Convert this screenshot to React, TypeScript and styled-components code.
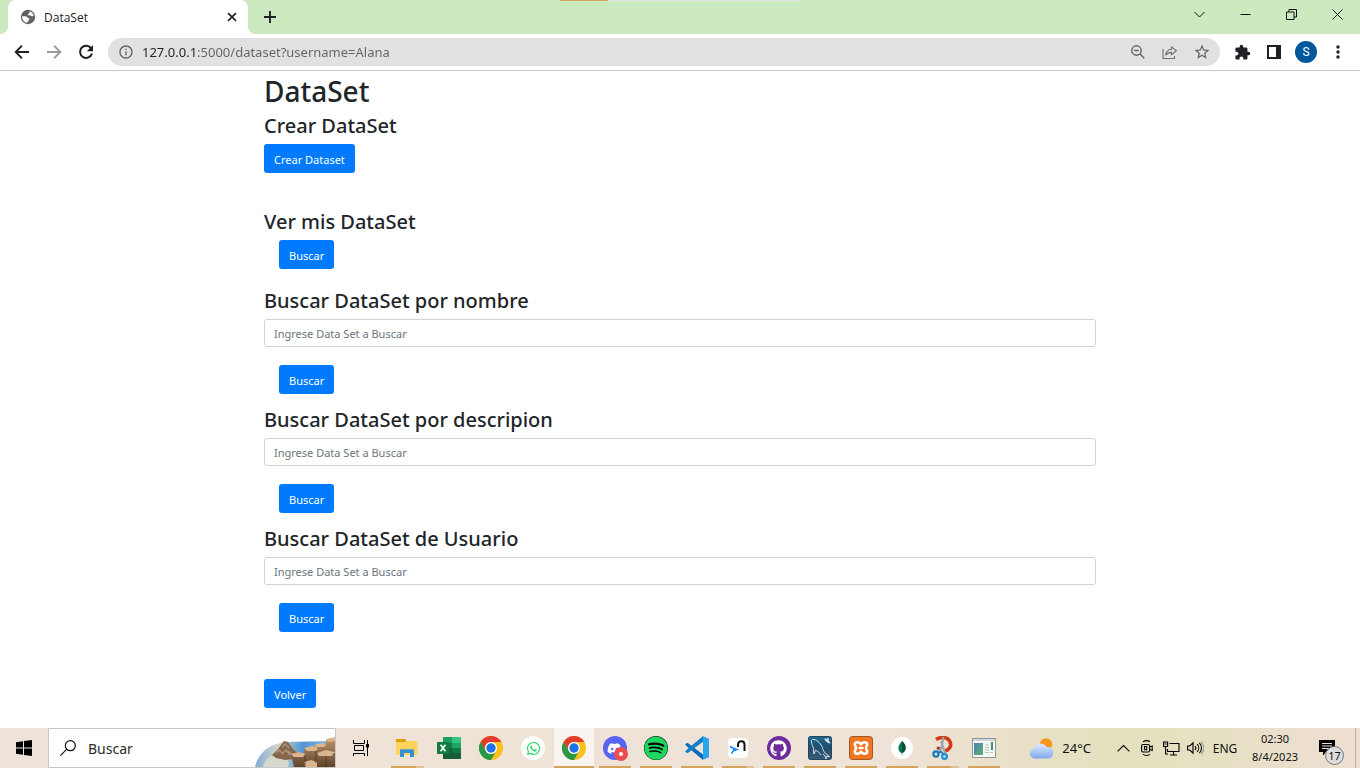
import React from "react";
import styled, { createGlobalStyle } from "styled-components";
import {
  MdInfoOutline,
  MdStarBorder,
  MdExtension,
  MdMoreVert,
} from "react-icons/md";
import { FaWhatsapp, FaDiscord, FaSpotify, FaGithub } from "react-icons/fa";

const GlobalStyle = createGlobalStyle`
  *, *::before, *::after { box-sizing: border-box; }
  body {
    margin: 0;
    background: #fff;
    color: #212529;
    font-family: "Noto Sans", "Open Sans", sans-serif;
  }
  button, input { font-family: inherit; }
  button { margin: 0; padding: 0; border: 0; background: none; color: inherit; }
  svg { display: block; flex: none; }
`;

const Screen = styled.div`
  display: flex;
  flex-direction: column;
  min-height: 100vh;
  position: relative;
`;

/* ---------- browser ---------- */

const ProgressStrip = styled.div`
  position: absolute;
  top: 0;
  left: 50%;
  width: 240px;
  height: 1px;
  margin-left: -120px;
  background: linear-gradient(90deg, #d4a35c 48px, #e3e1e6 48px);
`;

const TabStrip = styled.header`
  display: flex;
  height: 34px;
  padding-left: 8px;
  background: #cbeabf;
`;

const Tab = styled.div`
  display: flex;
  align-items: center;
  position: relative;
  width: 240px;
  padding: 0 10px 0 12px;
  border-radius: 8px 8px 0 0;
  background: #fff;
  color: #202124;
  font-size: 12px;
  &::before, &::after {
    content: "";
    position: absolute;
    bottom: 0;
    width: 8px;
    height: 8px;
  }
  &::before {
    right: 100%;
    background: radial-gradient(circle at 0 0, #cbeabf 8px, #fff 8px);
  }
  &::after {
    left: 100%;
    background: radial-gradient(circle at 100% 0, #cbeabf 8px, #fff 8px);
  }
`;

const TabTitle = styled.span`
  flex: 1;
  margin-left: 8px;
  font-family: "Open Sans", sans-serif;
`;

const IconButton = styled.button<{ $w?: number }>`
  display: flex;
  align-items: center;
  justify-content: center;
  width: ${(p) => p.$w ?? 32}px;
  flex: none;
`;

const WindowButtons = styled.div`
  display: flex;
  height: 28px;
  margin-left: auto;
`;

const Toolbar = styled.nav`
  display: flex;
  align-items: center;
  height: 37px;
  padding: 0 6px;
  border-bottom: 1px solid #c8c8c8;
  color: #202124;
`;

const AddressBar = styled.label`
  display: flex;
  align-items: center;
  flex: 1;
  height: 28px;
  margin: 0 6px;
  padding: 0 2px 0 10px;
  border-radius: 14px;
  background: #e1e1e1;
  color: #5f6368;
`;

const AddressInput = styled.input`
  flex: 1;
  min-width: 0;
  margin-left: 8px;
  padding: 0;
  border: 0;
  outline: 0;
  background: linear-gradient(90deg, #202124 54px, #5f6368 54px);
  background-clip: text;
  -webkit-text-fill-color: transparent;
  color: #5f6368;
  font-size: 13px;
`;

const Avatar = styled.span`
  display: flex;
  align-items: center;
  justify-content: center;
  width: 22px;
  height: 22px;
  border-radius: 50%;
  background: #01579b;
  color: #fff;
  font-family: Roboto, sans-serif;
  font-size: 12px;
`;

/* ---------- page ---------- */

const Content = styled.main`
  flex: 1;
  width: 100%;
  max-width: 832px;
  margin: 0 auto;
  padding: 3px 0 20px;
`;

const Title = styled.h1`
  margin: 0 0 5px;
  font-size: 28px;
  font-weight: 500;
  line-height: 34px;
`;

const Section = styled.section<{ $gap: number }>`
  margin-bottom: ${(p) => p.$gap}px;
`;

const Heading = styled.h3`
  margin: 0 0 5px;
  font-size: 20px;
  font-weight: 500;
  line-height: 26px;
`;

const PrimaryButton = styled.button<{ $indent?: boolean }>`
  display: block;
  height: 29px;
  margin-left: ${(p) => (p.$indent ? 15 : 0)}px;
  padding: 2px 10px 0;
  border-radius: 3px;
  background: #007bff;
  color: #fff;
  font-size: 11px;
  line-height: 18px;
`;

const TextField = styled.input`
  display: block;
  width: 100%;
  height: 28px;
  margin-bottom: 18px;
  padding: 1px 9px 0;
  border: 1px solid #ced4da;
  border-radius: 3px;
  color: #495057;
  font-size: 11px;
  &::placeholder { color: #6c757d; opacity: 1; }
`;

/* ---------- taskbar ---------- */

const Taskbar = styled.footer`
  display: flex;
  height: 40px;
  background: linear-gradient(90deg, #efe2d8 0, #efe2d6 66%, #e8e0c8 75%, #e3e1bd 82%, #e6e0c3 90%, #eddfd0 97%);
  color: #111;
`;

const SearchBox = styled.label`
  display: flex;
  align-items: center;
  width: 288px;
  padding-left: 11px;
  border: 1px solid #c8c8c8;
  background: #fff;
`;

const SearchInput = styled.input`
  flex: 1;
  min-width: 0;
  margin-left: 12px;
  padding: 0;
  border: 0;
  outline: 0;
  font-size: 14px;
  &::placeholder { color: #2b2b2b; opacity: 1; }
`;

const Apps = styled.div`
  display: flex;
`;

type Run = "none" | "one" | "many";

const AppButton = styled.button<{ $w: number; $run: Run; $active?: boolean }>`
  display: flex;
  align-items: center;
  justify-content: center;
  position: relative;
  width: ${(p) => p.$w}px;
  background: ${(p) => (p.$active ? "#f9f4f0" : "none")};
  &::after {
    content: "";
    display: ${(p) => (p.$run === "none" ? "none" : "block")};
    position: absolute;
    bottom: 0;
    left: ${(p) => (p.$active ? 0 : 5)}px;
    right: ${(p) => (p.$active ? 0 : 4)}px;
    height: 2px;
    background: ${(p) =>
      p.$run === "many"
        ? "linear-gradient(90deg, #d4a35c 75%, #dfc095 75%)"
        : "#d4a35c"};
  }
`;

const Tray = styled.div`
  display: flex;
  align-items: center;
  margin-left: auto;
  font-size: 12px;
`;

const Weather = styled.button`
  display: flex;
  align-items: center;
  gap: 8px;
  margin-right: 20px;
  font-size: 13px;
`;

const Language = styled.button`
  width: 36px;
  font-size: 12px;
`;

const Clock = styled.button`
  width: 64px;
  font-size: 11px;
  line-height: 18px;
  text-align: center;
`;

const Notifications = styled.button`
  position: relative;
  display: flex;
  align-items: center;
  justify-content: center;
  width: 40px;
  height: 40px;
`;

const Count = styled.span`
  position: absolute;
  left: 18px;
  top: 18px;
  width: 19px;
  height: 19px;
  border: 1px solid #777;
  border-radius: 50%;
  background: #dcdcdc;
  font-size: 11px;
  line-height: 17px;
  text-align: center;
`;

const ShowDesktop = styled.button`
  width: 5px;
  height: 40px;
  margin-left: 8px;
  border-left: 1px solid #b9ad9f;
`;

/* ---------- drawings ---------- */

const Globe = () => (
  <svg width="16" height="16" viewBox="0 0 16 16">
    <circle cx="8" cy="8" r="7.2" fill="#5f6368" />
    <path d="M2 7.400C4.200 7 6.700 7.200 7.200 8.300c.4 1 1.800.3 2.100 1.300.3 1-.8 1.300-.9 2.200-.1.700-.9.800-1 1.800-3.300-.3-5.600-3.200-5.400-6.200z" fill="#fff" />
    <path d="M9.600 2.400c2.200.6 3.600 2.100 4.100 4.300-1 .9-2.500.7-3.300-.1-.6-.6-1.900.2-2.400-.5-.5-.8.200-1.300.9-1.500.7-.2.200-1.300.7-2.200z" fill="#fff" />
  </svg>
);

const Stroke = ({ d, size = 16, color = "#202124" }: { d: string; size?: number; color?: string }) => (
  <svg width={size} height={size} viewBox="0 0 16 16" fill="none" stroke={color} strokeWidth="1.900">
    <path d={d} />
  </svg>
);

const Reload = () => (
  <svg width="16" height="16" viewBox="0 0 16 16">
    <path d="M13.300 4.500A6.100 6.100 0 1 0 14 9.500" fill="none" stroke="#202124" strokeWidth="2" />
    <path d="M15 1v6.200H8.800z" fill="#202124" />
  </svg>
);

const ZoomOut = () => (
  <svg width="16" height="16" viewBox="0 0 16 16" fill="none" stroke="#5f6368" strokeWidth="1.4">
    <circle cx="6.5" cy="6.5" r="4.7" />
    <path d="M4.2 6.5h4.6M10 10l4.3 4.3" />
  </svg>
);

const Share = () => (
  <svg width="16" height="16" viewBox="0 0 16 16" fill="none" stroke="#6c6f73" strokeWidth="1.1">
    <path d="M1 5v9.5h11.5V12M9.5 3l5 3.8-5 3.8V8.4C7 8.4 5 9.2 3.6 11.3 4 8 6 5.500 9.500 5.200z" />
  </svg>
);

const SidePanel = () => (
  <svg width="14" height="14" viewBox="0 0 14 14">
    <path d="M0 0h14v14H0z" fill="#202124" />
    <path d="M2 2h7v10H2z" fill="#fff" />
  </svg>
);

const Chrome = () => (
  <svg width="24" height="24" viewBox="0 0 24 24">
    <circle cx="12" cy="12" r="12" fill="#fbc11a" />
    <path d="M1.6 6A12 12 0 0 1 22.4 6H12a6 6 0 0 0-5.2 9z" fill="#e33b2e" />
    <path d="M1.6 6A12 12 0 0 0 12 24l5.2-9A6 6 0 0 1 6.800 15z" fill="#269847" />
    <circle cx="12" cy="12" r="6" fill="#fff" />
    <circle cx="12" cy="12" r="4.7" fill="#1a73e8" />
  </svg>
);

const Windows = () => (
  <svg width="16" height="16" viewBox="0 0 16 16">
    <path d="M0 2.2l7-1v6.3H0zM8 1.1L16 0v7.5H8zM0 8.5h7v6.3l-7-1zM8 8.5h8V16l-8-1.1z" fill="#000" />
  </svg>
);

const Magnifier = () => (
  <svg width="16" height="16" viewBox="0 0 16 16" fill="none" stroke="#111" strokeWidth="1.2">
    <circle cx="10.3" cy="5.7" r="5" />
    <path d="M6.8 9.2L.4 15.6" />
  </svg>
);

const Causeway = () => (
  <svg width="80" height="38" viewBox="0 0 80 38">
    <defs>
      <linearGradient id="sea" x1="0" y1="0" x2="1" y2="0">
        <stop offset="0" stopColor="#7fabd8" />
        <stop offset=".3" stopColor="#d8d6c4" />
        <stop offset=".6" stopColor="#4e94d6" />
        <stop offset="1" stopColor="#9cc4e4" />
      </linearGradient>
      <linearGradient id="rock" x1="0" y1="0" x2="0" y2="1">
        <stop offset="0" stopColor="#c0966c" />
        <stop offset="1" stopColor="#5f432b" />
      </linearGradient>
    </defs>
    <path d="M0 38C3 24 14 15 30 13l50-1v26z" fill="url(#sea)" />
    <path d="M8 38c2-10 9-12 15-12 10 1 12 6 10 12z" fill="#d6d8cc" />
    <path d="M17 26l6-6 6-8 4 1 5 7 6 5-5 5-9 1-9-2z" fill="#86674d" />
    <path d="M21 24l3-3 3 3M27 18l3-3 4 4M27 25l4-4 4 5M33 22l4 3" stroke="#b4967a" strokeWidth="1.3" fill="none" />
    <path d="M36 25l8-2 7 3v12H39zM49 20l8-2 7 2v18H51zM59 17l8-2 4 2v9H59zM62 24l9-3 9 3v14H62zM71 11l9-2v14l-9-1z" fill="url(#rock)" />
    <path d="M36 25l8-2 6 2-2 3h-9zM49 19l8-2 6 2-2 3h-9zM62 24l9-3 8 2-2 4H64zM59 16l8-2 4 2-2 2h-8zM71 10l9-2v4l-7 1zM49 33l7-2 6 2v5H50z" fill="#d9b690" />
    <path d="M50 27v11M61 22v12M71 27v11" stroke="#4c3524" strokeWidth=".8" />
  </svg>
);

const TaskView = () => (
  <svg width="16" height="16" viewBox="0 0 16 16" fill="none" stroke="#000" strokeWidth="1">
    <path d="M.5 0v3.500h11V0M1.500 5.500h9v5h-9zM.5 16v-2.500h11V16M14.500 0v16" />
    <path d="M13 4h3v3.500h-3z" fill="#000" stroke="none" />
  </svg>
);

const Explorer = () => (
  <svg width="22" height="20" viewBox="0 0 22 20">
    <path d="M0 2.5V2c0-.8.6-1 1-1h8l1.500 2H20c1 0 1.500.5 1.500 1.300V16c0 .8-.5 1-1 1H1c-.6 0-1-.3-1-1z" fill="#ffd45e" />
    <path d="M0 4V2c0-.8.6-1 1-1h8l1.300 2H10L8.800 4z" fill="#dca000" />
    <path d="M4 19v-6.500c0-.8.5-1.200 1.200-1.200h11.600c.7 0 1.200.4 1.200 1.200V19h-4v-4H8v4z" fill="#3590d4" />
  </svg>
);

const Excel = () => (
  <svg width="24" height="22" viewBox="0 0 24 22">
    <path d="M6 1c0-.6.4-1 1-1h8v22H7c-.6 0-1-.4-1-1z" fill="#1e9e63" />
    <path d="M15 0h8c.6 0 1 .4 1 1v5h-9z" fill="#33c481" />
    <path d="M6 6h9v5H6z" fill="#157a48" />
    <path d="M15 6h9v5h-9z" fill="#21a366" />
    <path d="M6 11h18v10c0 .6-.4 1-1 1H7c-.6 0-1-.4-1-1z" fill="#185c37" />
    <path d="M15 11h9v5h-9z" fill="#107c41" />
    <rect y="5" width="12" height="12" rx="1" fill="#107c41" />
    <path d="M3.600 7.700l4.800 6.600M8.400 7.700l-4.800 6.600" stroke="#fff" strokeWidth="1.700" />
  </svg>
);

const Disc = styled.span<{ $bg: string; $fg: string; $radius?: number; $size?: number }>`
  display: flex;
  align-items: center;
  justify-content: center;
  position: relative;
  width: ${(p) => p.$size ?? 24}px;
  height: ${(p) => p.$size ?? 24}px;
  border-radius: ${(p) => p.$radius ?? 12}px;
  background: ${(p) => p.$bg};
  color: ${(p) => p.$fg};
`;

const RecordDot = styled.span`
  position: absolute;
  left: 11px;
  top: 11px;
  width: 14px;
  height: 14px;
  border: 5px solid #ed4d4f;
  border-radius: 50%;
  background: #fff;
`;

const VsCode = () => (
  <svg width="24" height="24" viewBox="0 0 24 24">
    <path d="M0 8.300l2.500-1.500L18 18.400V24L2 10.400z" fill="#0a6fb8" />
    <path d="M0 15.800l2.500 1.400L18 5.800V0L2 13.600z" fill="#0f80cc" />
    <path d="M17.400 0L24 2.800v18.400L17.400 24c.4-.6.6-1.200.6-2V2c0-.8-.2-1.400-.6-2z" fill="#2aa6ef" />
  </svg>
);

const Neo = () => (
  <svg width="16" height="16" viewBox="0 0 16 16" fill="none">
    <path d="M8 7V4.500C8 .200 14.500.200 14.500 4.500V11" stroke="#111" strokeWidth="2" />
    <path d="M0 6.500l3 1.500 3 1.500M4.500 9.500l-3 4M4.500 9.500h4" stroke="#168cff" strokeWidth="1.600" />
    <circle cx="4.600" cy="9.500" r="1.800" fill="#168cff" />
  </svg>
);

const MySql = () => (
  <svg width="24" height="24" viewBox="0 0 24 24">
    <defs>
      <linearGradient id="deep" x1="0" y1="0" x2="0" y2="1">
        <stop offset="0" stopColor="#1d6a94" />
        <stop offset=".5" stopColor="#214d6c" />
        <stop offset="1" stopColor="#3b5f77" />
      </linearGradient>
    </defs>
    <rect x=".5" y=".5" width="23" height="23" rx="2" fill="url(#deep)" stroke="#23465f" />
    <path d="M6 18c-1.500-2 .5-5-1.500-8.500C3.500 7.500 2.500 4 4.500 3.500c4-.5 7 3 9.500 7 1 3 1.500 5 3.500 7l4 3-3 0-.5 2.500c-.5-2.500-1.500-4-3-5" fill="none" stroke="#d5e0e7" strokeWidth="1" />
    <path d="M6 18c.8-1.500 1-2.500 1.500-4 1.500 1 4 2.500 5.500 5" fill="none" stroke="#d5e0e7" strokeWidth="1" />
    <path d="M16 2.500l2.500.5L20.500 1.500 21 5l2 2.500-3-.5-2.500-2z" fill="#d5e0e7" />
  </svg>
);

const Xampp = () => (
  <svg width="24" height="24" viewBox="0 0 24 24">
    <rect x=".5" y=".5" width="23" height="23" rx="3" fill="#f1761f" stroke="#a0562a" />
    <path d="M12 8.300C10.500 6 6.500 5.300 5.800 7.800c-.4 1.700 1.200 2.200 1.200 4.200s-1.600 2.500-1.200 4.200c.7 2.500 4.700 1.800 6.200-.5 1.500 2.300 5.500 3 6.200.5.4-1.700-1.200-2.200-1.200-4.200s1.600-2.500 1.200-4.200C17.500 5.300 13.500 6 12 8.300z" fill="none" stroke="#fff" strokeWidth="2.600" strokeLinejoin="round" />
    <path d="M9.500 12h5" stroke="#fff" strokeWidth="2.400" />
  </svg>
);

const Leaf = () => (
  <svg width="8" height="14" viewBox="0 0 8 14">
    <path d="M4 0c2 2 4 4 3.600 7.400C7.300 10 5.500 11.500 4.300 12V14h-.6v-2C2 11.400.6 9.700.4 7.400.2 4 2.500 2 4 0z" fill="#10744f" />
    <path d="M4 0c2 2 4 4 3.600 7.400C7.300 10 5.500 11.500 4 12z" fill="#084f37" />
  </svg>
);

const Scissors = () => (
  <svg width="22" height="24" viewBox="0 0 22 24" fill="none">
    <path d="M4 3.500C8 1 14 .500 17 4c3 4 2 9-4 11" stroke="#d33a14" strokeWidth="3.600" />
    <path d="M5 11.500l4 2" stroke="#b52c10" strokeWidth="2.600" />
    <path d="M11.500 1L10 9l-2.500 7M9 5l2 6 2 6" stroke="#9aa5b0" strokeWidth="2.200" />
    <circle cx="4" cy="18" r="2.600" stroke="#1178bd" strokeWidth="2.200" />
    <circle cx="12.500" cy="20.500" r="2.400" stroke="#1594dc" strokeWidth="2.200" />
    <path d="M6 17.500l3-2 2.500 3" stroke="#1178bd" strokeWidth="1.600" />
  </svg>
);

const WindowApp = () => (
  <svg width="24" height="20" viewBox="0 0 24 20">
    <defs>
      <linearGradient id="pane" x1="0" y1="0" x2="1" y2="1">
        <stop offset="0" stopColor="#4a82b4" />
        <stop offset="1" stopColor="#5fb06a" />
      </linearGradient>
    </defs>
    <rect x=".5" y=".5" width="23" height="19" fill="#f6f8f8" stroke="#8d979c" />
    <path d="M1 1h22v2H1z" fill="#cfd6da" />
    <path d="M2 5h9v12H2z" fill="url(#pane)" />
    <path d="M13 7h4M13 9.500h4M13 12h4M13 14.500h4M18 14.500h3" stroke="#b9c0c4" />
    <path d="M19 4h2v8h-2z" fill="#3c9b63" />
  </svg>
);

const SunCloud = () => (
  <svg width="25" height="21" viewBox="0 0 25 21">
    <defs>
      <linearGradient id="cloud" x1="0" y1="0" x2="0" y2="1">
        <stop offset="0" stopColor="#dfebff" />
        <stop offset="1" stopColor="#7ea8ee" />
      </linearGradient>
    </defs>
    <circle cx="17" cy="6.500" r="6.200" fill="#f8951f" />
    <path d="M5.500 20.500a5 5 0 0 1-.5-9.900A7 7 0 0 1 17.600 9a5.800 5.800 0 0 1 1.900 11.500z" fill="url(#cloud)" />
  </svg>
);

const Camera = () => (
  <svg width="12" height="16" viewBox="0 0 12 16" fill="none" stroke="#000" strokeWidth="1.100">
    <rect x=".6" y="4.500" width="8" height="7.500" rx="1.500" />
    <path d="M3.500 6.500h2.200v3.200H3.500z" />
    <path d="M8.600 7l2.600-1v4.500l-2.600-1M2 1.800C4 .4 7 .4 9 1.800M2 14.400c2 1.200 5 1.200 7 0" />
  </svg>
);

const Network = () => (
  <svg width="17" height="15" viewBox="0 0 17 15" fill="none" stroke="#000" strokeWidth="1.100">
    <path d="M6.500 2.500H16v8H4.500V8M10.500 10.500V14M7 14h7M.6 1h4v4.500h-4zM2.600 5.500V13H5M1.600 3h2" />
  </svg>
);

const Speaker = () => (
  <svg width="17" height="14" viewBox="0 0 17 14" fill="none" stroke="#000" strokeWidth="1.100">
    <path d="M.6 5v4h2.200L6 12.200V1.800L2.800 5zM8 5c1 1.200 1 2.800 0 4M10.200 3.200c2 2.200 2 5.400 0 7.600" />
    <path d="M12.400 1.800c2.800 3 2.800 7.400 0 10.400" />
    <path d="M14.400.6c3 3.600 3 9.200 0 12.800" stroke="#999" />
  </svg>
);

const Note = () => (
  <svg width="16" height="16" viewBox="0 0 16 16">
    <path d="M0 0h16v12h-9l-3 3.500V12H0z" fill="#000" />
    <path d="M3 3.500h10M3 6h10M3 8.500h7" stroke="#eddfd0" strokeWidth="1.100" />
  </svg>
);

const Line = ({ d, size = 11 }: { d: string; size?: number }) => (
  <svg width={size} height={size} viewBox="0 0 11 11" fill="none" stroke="#111" strokeWidth="1">
    <path d={d} />
  </svg>
);

/* ---------- data ---------- */

type AppItem = { name: string; icon: React.ReactNode; run: Run; active?: boolean };

const pinned: AppItem[] = [
  { name: "Explorador de archivos", icon: <Explorer />, run: "many" },
  { name: "Excel", icon: <Excel />, run: "none" },
  { name: "Chrome", icon: <Chrome />, run: "none" },
  { name: "WhatsApp", icon: <Disc $bg="#fff" $fg="#25d366"><FaWhatsapp size={15} /></Disc>, run: "none" },
];

const running: AppItem[] = [
  { name: "DataSet - Chrome", icon: <Chrome />, run: "one", active: true },
  { name: "Discord", icon: <Disc $bg="#5865f2" $fg="#fff"><FaDiscord size={15} /><RecordDot /></Disc>, run: "one" },
  { name: "Spotify", icon: <Disc $bg="#000" $fg="#1ed760"><FaSpotify size={24} /></Disc>, run: "one" },
  { name: "Visual Studio Code", icon: <VsCode />, run: "one" },
  { name: "Ngrok", icon: <Disc $bg="#fff" $fg="#111" $size={20} $radius={4}><Neo /></Disc>, run: "many" },
  { name: "GitHub Desktop", icon: <Disc $bg="#6e2c9c" $fg="#fff"><FaGithub size={17} /></Disc>, run: "one" },
  { name: "MySQL Workbench", icon: <MySql />, run: "one" },
  { name: "XAMPP", icon: <Xampp />, run: "one" },
  { name: "MongoDB Compass", icon: <Disc $bg="#fff" $fg="#10744f" $size={22}><Leaf /></Disc>, run: "one" },
  { name: "Recortes", icon: <Scissors />, run: "many" },
  { name: "Panel", icon: <WindowApp />, run: "one" },
];

const searches = [
  { id: "nombre", title: "Buscar DataSet por nombre", gap: 13 },
  { id: "descripcion", title: "Buscar DataSet por descripion", gap: 13 },
  { id: "usuario", title: "Buscar DataSet de Usuario", gap: 47 },
];

export default function App() {
  return (
    <Screen>
      <GlobalStyle />
      <TabStrip>
        <Tab>
          <Globe />
          <TabTitle>DataSet</TabTitle>
          <IconButton $w={12} aria-label="Cerrar pestaña"><Stroke size={14} d="M3.500 3.500l9 9M12.500 3.500l-9 9" /></IconButton>
        </Tab>
        <IconButton $w={44} aria-label="Nueva pestaña"><Stroke d="M8 2v12M2 8h12" /></IconButton>
        <WindowButtons>
          <IconButton $w={46} aria-label="Buscar pestañas"><Line d="M.5 3l5 5 5-5" /></IconButton>
          <IconButton $w={46} aria-label="Minimizar"><Line d="M.5 5.500h10" /></IconButton>
          <IconButton $w={46} aria-label="Restaurar"><Line d="M.5 3h7.500v7.500H.5zM3 3V.5h7.500V8H8" /></IconButton>
          <IconButton $w={46} aria-label="Cerrar"><Line d="M.5.5l10 10M10.500.5l-10 10" /></IconButton>
        </WindowButtons>
      </TabStrip>
      <ProgressStrip />
      <Toolbar>
        <IconButton aria-label="Atrás"><Stroke d="M15 8H2.500M8 1.700L1.700 8 8 14.300" /></IconButton>
        <IconButton aria-label="Adelante"><Stroke color="#9a9a9a" d="M1 8h12.500M8 1.700L14.300 8 8 14.300" /></IconButton>
        <IconButton aria-label="Recargar"><Reload /></IconButton>
        <AddressBar>
          <MdInfoOutline size={16} />
          <AddressInput aria-label="Dirección" defaultValue="127.0.0.1:5000/dataset?username=Alana" />
          <IconButton aria-label="Zoom"><ZoomOut /></IconButton>
          <IconButton aria-label="Compartir"><Share /></IconButton>
          <IconButton aria-label="Favorito"><MdStarBorder size={18} /></IconButton>
        </AddressBar>
        <IconButton aria-label="Extensiones"><MdExtension size={17} /></IconButton>
        <IconButton aria-label="Panel lateral"><SidePanel /></IconButton>
        <IconButton aria-label="Perfil"><Avatar>S</Avatar></IconButton>
        <IconButton aria-label="Menú"><MdMoreVert size={20} /></IconButton>
      </Toolbar>

      <Content>
        <Title>DataSet</Title>
        <Section $gap={36}>
          <Heading>Crear DataSet</Heading>
          <PrimaryButton>Crear Dataset</PrimaryButton>
        </Section>
        <Section $gap={19}>
          <Heading>Ver mis DataSet</Heading>
          <PrimaryButton $indent>Buscar</PrimaryButton>
        </Section>
        {searches.map((s) => (
          <Section key={s.id} $gap={s.gap}>
            <Heading><label htmlFor={s.id}>{s.title}</label></Heading>
            <TextField id={s.id} placeholder="Ingrese Data Set a Buscar" />
            <PrimaryButton $indent>Buscar</PrimaryButton>
          </Section>
        ))}
        <PrimaryButton>Volver</PrimaryButton>
      </Content>

      <Taskbar>
        <IconButton $w={48} aria-label="Inicio"><Windows /></IconButton>
        <SearchBox>
          <Magnifier />
          <SearchInput placeholder="Buscar" aria-label="Buscar" />
          <Causeway />
        </SearchBox>
        <IconButton $w={50} aria-label="Vista de tareas"><TaskView /></IconButton>
        <Apps>
          {pinned.map((a) => (
            <AppButton key={a.name} aria-label={a.name} $w={42} $run={a.run}>{a.icon}</AppButton>
          ))}
          {running.map((a) => (
            <AppButton key={a.name} aria-label={a.name} $w={a.active ? 40 : 41} $run={a.run} $active={a.active}>{a.icon}</AppButton>
          ))}
        </Apps>
        <Tray>
          <Weather><SunCloud />24°C</Weather>
          <IconButton $w={24} aria-label="Iconos ocultos"><Line d="M.5 8l5-5 5 5" size={13} /></IconButton>
          <IconButton $w={24} aria-label="Cámara"><Camera /></IconButton>
          <IconButton $w={24} aria-label="Red"><Network /></IconButton>
          <IconButton $w={24} aria-label="Volumen"><Speaker /></IconButton>
          <Language>ENG</Language>
          <Clock>02:30<br />8/4/2023</Clock>
          <Notifications aria-label="Notificaciones"><Note /><Count>17</Count></Notifications>
          <ShowDesktop aria-label="Mostrar escritorio" />
        </Tray>
      </Taskbar>
    </Screen>
  );
}
